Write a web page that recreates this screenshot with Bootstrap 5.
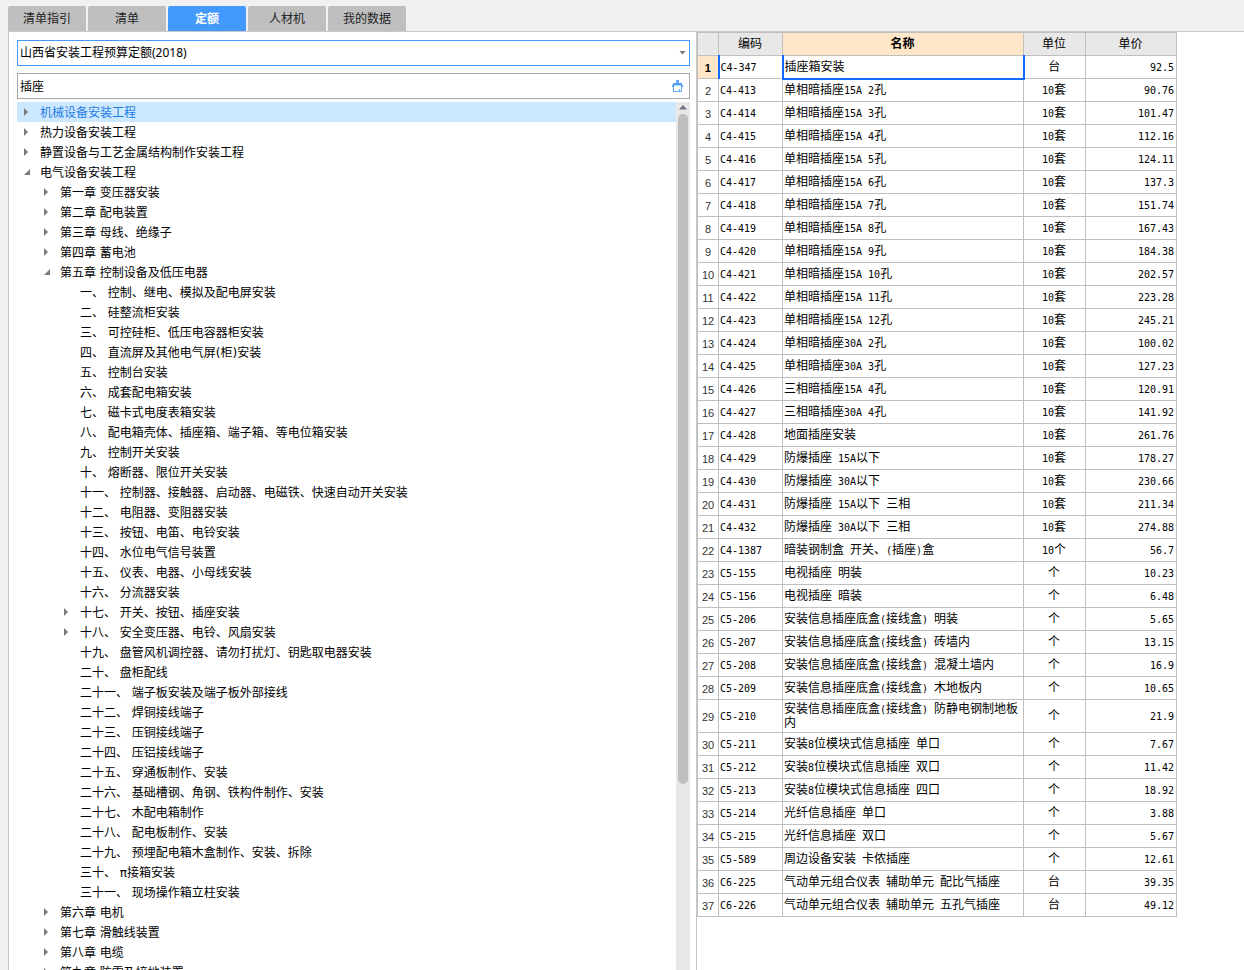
<!DOCTYPE html>
<html lang="zh-CN">
<head>
<meta charset="utf-8">
<meta name="viewport" content="width=device-width, initial-scale=1">
<title>定额查询</title>
<link href="https://cdn.jsdelivr.net/npm/bootstrap@5.3.0/dist/css/bootstrap.min.css" rel="stylesheet">
<style>
  body { font-family: "Noto Sans", "Noto Sans CJK SC", sans-serif; font-size: 12px; color: #000; background: #f1f1f1; }
  .tab-strip { gap: 2px; padding: 6px 0 0 8px; }
  .tab-strip .nav-link { width: 78px; height: 25px; padding: 0; line-height: 25px; color: #222; background: #bfbfbf; border: 0; border-radius: 2px 2px 0 0; }
  .tab-strip .nav-link.active { color: #fff; font-weight: 700; background: #4499ff; }
  .work-area { margin-left: 8px; background: #fff; border-top: 1px solid #c8c8c8; border-left: 1px solid #c8c8c8; min-height: 0; }
  .index-pane { flex: 673 1 0; padding: 8px 6px 0 8px; min-width: 0; }
  .quota-pane { flex: 547 1 0; border-left: 1px solid #c8c8c8; min-width: 0; }
  .index-pane .form-select, .index-pane .form-control { height: 26px; min-height: 26px; padding: 0 24px 0 2px; font-size: 12px; line-height: 24px; color: #000; border: 1px solid #a6a6a6; border-radius: 0; background-image: none; }
  .index-pane .form-select { border-color: #4499ff; }
  .select-caret { right: 4px; top: 11px; pointer-events: none; }
  .search-box { margin-top: 7px; }
  .clear-btn { right: 5px; top: 5px; line-height: 0; }
  .tree-wrap { margin-top: 3px; min-height: 0; }
  .tree-list { font-family: "DejaVu Sans", "Noto Sans CJK SC", sans-serif; min-width: 0; }
  .tree-list li { height: 20px; line-height: 22px; white-space: nowrap; }
  .tree-list li.picked { color: #1e7be6; background: #cce8ff; }
  .tree-list .lv1 { padding-left: 20px; }
  .tree-list .lv2 { padding-left: 40px; }
  .twist { width: 23px; height: 20px; padding-left: 7px; line-height: 0; text-align: left; }
  .scroll-track { width: 14px; background: #e8e8e8; padding-top: 3px; }
  .scroll-thumb { width: 10px; height: 77.5%; margin-top: 4px; border-radius: 5px; background: #bfbfbf; }
  .quota-table { width: 480px; table-layout: fixed; border-collapse: collapse; line-height: 14px; font-family: "DejaVu Sans", "Noto Sans CJK SC", sans-serif; }
  .quota-table th, .quota-table td { height: 23px; padding: 2px 2px 2px 1px; border: 1px solid #bfbfbf; font-weight: 400; vertical-align: middle; }
  .quota-table thead th { background: #e8e8e8; text-align: center; }
  .quota-table thead th.current { background: #ffe6c8; font-weight: 700; }
  .quota-table tbody th { font-family: "Liberation Sans", sans-serif; font-size: 11px; text-align: center; padding: 2px 0 1px; color: #333; }
  .quota-table tbody th.current { background: #ffe6c8; font-weight: 700; color: #000; border-right: 2px solid #0f6bff; }
  .quota-table td.chosen { border: 2px solid #0f6bff; border-top: 1px solid #4499ff; }
  .half { font-family: "DejaVu Sans Mono", monospace; font-size: 10px; line-height: 10px; }
  .c-no { width: 21px; } .c-code { width: 64px; } .c-name { width: 241px; } .c-unit { width: 62px; } .c-price { width: 91px; }
</style>
</head>
<body>
<div class="d-flex flex-column vh-100 overflow-hidden">
  <nav class="nav tab-strip">
    <button class="nav-link" type="button">清单指引</button>
    <button class="nav-link" type="button">清单</button>
    <button class="nav-link active" type="button">定额</button>
    <button class="nav-link" type="button">人材机</button>
    <button class="nav-link" type="button">我的数据</button>
  </nav>
  <main class="work-area d-flex flex-grow-1">
    <section class="index-pane d-flex flex-column">
      <div class="position-relative">
        <select class="form-select" aria-label="定额库"><option>山西省安装工程预算定额(2018)</option></select>
        <svg class="select-caret position-absolute" width="7" height="4" viewBox="0 0 7 4"><path d="M0.500 0h6L3.500 3.500z" fill="#777"/></svg>
      </div>
      <div class="position-relative search-box">
        <input class="form-control" type="text" value="插座" aria-label="搜索">
        <button class="clear-btn btn p-0 border-0 position-absolute" type="button" aria-label="清空">
          <svg width="14" height="15" viewBox="0 0 14 15"><path fill="#6aaefc" d="M5 2h3v3H5z"/><path fill="#4f9cf8" d="M2 5h9v2H2zM1 7h2v2H1zM10 7h2v2h-2z"/><path fill="#b8dafe" d="M3 7h7v1H3z"/><path fill="none" stroke="#5ba5fa" d="M2.500 8v5.500h8V8M8.500 11v2"/></svg>
        </button>
      </div>
      <div class="tree-wrap d-flex flex-grow-1">
        <ul id="tree" class="tree-list list-unstyled mb-0 flex-grow-1 overflow-hidden"></ul>
        <div class="scroll-track d-flex flex-column align-items-center">
          <svg width="8" height="5" viewBox="0 0 8 5"><path d="M4 0L8 4.500H0z" fill="#777080"/></svg>
          <div class="scroll-thumb"></div>
        </div>
      </div>
    </section>
    <section class="quota-pane overflow-hidden">
      <table class="quota-table">
        <colgroup><col class="c-no"><col class="c-code"><col class="c-name"><col class="c-unit"><col class="c-price"></colgroup>
        <thead><tr><th></th><th scope="col">编码</th><th scope="col" class="current">名称</th><th scope="col">单位</th><th scope="col">单价</th></tr></thead>
        <tbody id="rows"></tbody>
      </table>
    </section>
  </main>
</div>
<script src="https://cdn.jsdelivr.net/npm/bootstrap@5.3.0/dist/js/bootstrap.bundle.min.js"></script>
<script>
  // Each line: depth, state (+ collapsed, - expanded, . leaf), title
  const tree = `0+机械设备安装工程
0+热力设备安装工程
0+静置设备与工艺金属结构制作安装工程
0-电气设备安装工程
1+第一章 变压器安装
1+第二章 配电装置
1+第三章 母线、绝缘子
1+第四章 蓄电池
1-第五章 控制设备及低压电器
2.一、 控制、继电、模拟及配电屏安装
2.二、 硅整流柜安装
2.三、 可控硅柜、低压电容器柜安装
2.四、 直流屏及其他电气屏(柜)安装
2.五、 控制台安装
2.六、 成套配电箱安装
2.七、 磁卡式电度表箱安装
2.八、 配电箱壳体、插座箱、端子箱、等电位箱安装
2.九、 控制开关安装
2.十、 熔断器、限位开关安装
2.十一、 控制器、接触器、启动器、电磁铁、快速自动开关安装
2.十二、 电阻器、变阻器安装
2.十三、 按钮、电笛、电铃安装
2.十四、 水位电气信号装置
2.十五、 仪表、电器、小母线安装
2.十六、 分流器安装
2+十七、 开关、按钮、插座安装
2+十八、 安全变压器、电铃、风扇安装
2.十九、 盘管风机调控器、请勿打扰灯、钥匙取电器安装
2.二十、 盘柜配线
2.二十一、 端子板安装及端子板外部接线
2.二十二、 焊铜接线端子
2.二十三、 压铜接线端子
2.二十四、 压铝接线端子
2.二十五、 穿通板制作、安装
2.二十六、 基础槽钢、角钢、铁构件制作、安装
2.二十七、 木配电箱制作
2.二十八、 配电板制作、安装
2.二十九、 预埋配电箱木盒制作、安装、拆除
2.三十、 π接箱安装
2.三十一、 现场操作箱立柱安装
1+第六章 电机
1+第七章 滑触线装置
1+第八章 电缆
1+第九章 防雷及接地装置`.split('\n');
  const shapes = { '+': 'M0 0v8l4-4z', '-': 'M6 1v6H0z' };
  document.getElementById('tree').innerHTML = tree.map((line, i) => {
    const state = line[1];
    const twist = state === '.' ? '<span class="twist"></span>'
      : `<button type="button" class="twist btn border-0 rounded-0 py-0 pe-0" aria-label="展开或折叠"><svg width="7" height="8" viewBox="0 0 7 8"><path fill="#7a7a7a" d="${shapes[state]}"/></svg></button>`;
    return `<li class="d-flex lv${line[0]}${i ? '' : ' picked'}">${twist}<span>${line.slice(2)}</span></li>`;
  }).join('');

  const quotas = `C4-347|插座箱安装|台|92.5
C4-413|单相暗插座15A 2孔|10套|90.76
C4-414|单相暗插座15A 3孔|10套|101.47
C4-415|单相暗插座15A 4孔|10套|112.16
C4-416|单相暗插座15A 5孔|10套|124.11
C4-417|单相暗插座15A 6孔|10套|137.3
C4-418|单相暗插座15A 7孔|10套|151.74
C4-419|单相暗插座15A 8孔|10套|167.43
C4-420|单相暗插座15A 9孔|10套|184.38
C4-421|单相暗插座15A 10孔|10套|202.57
C4-422|单相暗插座15A 11孔|10套|223.28
C4-423|单相暗插座15A 12孔|10套|245.21
C4-424|单相暗插座30A 2孔|10套|100.02
C4-425|单相暗插座30A 3孔|10套|127.23
C4-426|三相暗插座15A 4孔|10套|120.91
C4-427|三相暗插座30A 4孔|10套|141.92
C4-428|地面插座安装|10套|261.76
C4-429|防爆插座 15A以下|10套|178.27
C4-430|防爆插座 30A以下|10套|230.66
C4-431|防爆插座 15A以下 三相|10套|211.34
C4-432|防爆插座 30A以下 三相|10套|274.88
C4-1387|暗装钢制盒 开关、(插座)盒|10个|56.7
C5-155|电视插座 明装|个|10.23
C5-156|电视插座 暗装|个|6.48
C5-206|安装信息插座底盒(接线盒) 明装|个|5.65
C5-207|安装信息插座底盒(接线盒) 砖墙内|个|13.15
C5-208|安装信息插座底盒(接线盒) 混凝土墙内|个|16.9
C5-209|安装信息插座底盒(接线盒) 木地板内|个|10.65
C5-210|安装信息插座底盒(接线盒) 防静电钢制地板内|个|21.9
C5-211|安装8位模块式信息插座 单口|个|7.67
C5-212|安装8位模块式信息插座 双口|个|11.42
C5-213|安装8位模块式信息插座 四口|个|18.92
C5-214|光纤信息插座 单口|个|3.88
C5-215|光纤信息插座 双口|个|5.67
C5-589|周边设备安装 卡侬插座|个|12.61
C6-225|气动单元组合仪表 辅助单元 配比气插座|台|39.35
C6-226|气动单元组合仪表 辅助单元 五孔气插座|台|49.12`.split('\n');
  // Latin runs take a face half as wide as a Chinese character
  const mixed = s => s.replace(/[\x20-\x7e]+/g, '<span class="half">$&</span>');
  document.getElementById('rows').innerHTML = quotas.map((line, i) => {
    const [code, name, unit, price] = line.split('|').map(mixed);
    return `<tr><th scope="row"${i ? '' : ' class="current"'}>${i + 1}</th><td>${code}</td><td${i ? '' : ' class="chosen"'}>${name}</td><td class="text-center">${unit}</td><td class="text-end">${price}</td></tr>`;
  }).join('');
</script>
</body>
</html>
